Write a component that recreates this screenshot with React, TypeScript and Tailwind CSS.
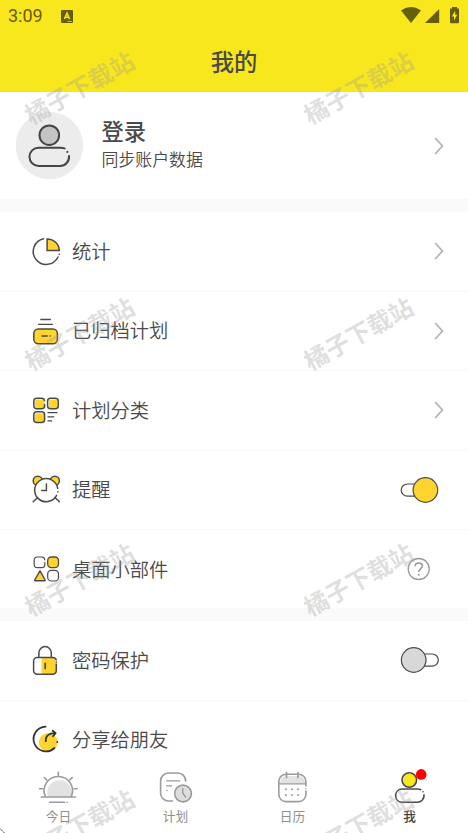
import * as React from "react";

const INK = "#4a4a4a";
const SUN = "#ffd42e";

type IconProps = { children: React.ReactNode };

// every row icon is drawn on a 32px board
const RowIcon: React.FC<IconProps> = ({ children }) => (
    <svg
        width={32}
        height={32}
        viewBox="0 0 32 32"
        fill="none"
        stroke={INK}
        strokeWidth={1.5}
        strokeLinecap="round"
        strokeLinejoin="round"
        className="shrink-0"
    >
        {children}
    </svg>
);

const StatsIcon: React.FC = () => (
    <RowIcon>
        <path d="M13.6 3.7A13 13 0 1 0 28 22" />
        <path d="M29.2 19.2v.2" />
        <path d="M17.1 15.6V3.9A12 12 0 0 1 29.3 15.6Z" fill={SUN} strokeLinejoin="miter" />
    </RowIcon>
);

const ArchiveIcon: React.FC = () => (
    <RowIcon>
        <path d="M10.8 4.5h9.6M8.6 9.3h13.8" strokeWidth={1.3} />
        <rect x={3.8} y={13.9} width={23.6} height={14.9} rx={4.5} fill={SUN} />
        <path d="M12 21h5.2M20 21h.2" />
    </RowIcon>
);

const CategoryIcon: React.FC = () => (
    <RowIcon>
        <rect x={5} y={5.5} width={9.5} height={8.8} rx={2} fill={SUN} stroke="none" />
        <rect x={19} y={5.5} width={8.8} height={8.8} rx={2} fill={SUN} stroke="none" />
        <rect x={5} y={19.2} width={9.5} height={8.8} rx={2} fill={SUN} stroke="none" />
        <path d="M14.6 6.6A3 3 0 0 0 11.6 4.2H6.8A3 3 0 0 0 3.8 7.2V11.8A3 3 0 0 0 6.8 14.8H11.6A3 3 0 0 0 14.6 11.8V10.5" />
        <rect x={17.6} y={4.2} width={10.7} height={10.6} rx={3} />
        <rect x={3.8} y={17.8} width={10.8} height={10.6} rx={3} />
        <path d="M18 18.7h9M18 22.8h5.8M18 26.9h3.6" strokeWidth={1.3} />
    </RowIcon>
);

const AlarmIcon: React.FC = () => (
    <RowIcon>
        <circle cx={7.8} cy={6.8} r={4.6} fill={SUN} />
        <circle cx={24.8} cy={6.8} r={4.6} fill={SUN} />
        <circle cx={16.3} cy={16} r={11.6} fill="#fff" stroke="none" />
        <path d="M27.7 14.3A11.6 11.6 0 1 0 26.6 21.4" />
        <path d="M27.8 17.7v.2" />
        <path d="M7.4 23.8l-4.2 4M25.2 23.8l4.2 4" />
        <path d="M16.4 10v6.6h-4.7" strokeLinejoin="miter" />
    </RowIcon>
);

const WidgetIcon: React.FC = () => (
    <RowIcon>
        <path d="M14.8 6.8A3.2 3.2 0 0 0 12 4H7.4A3.2 3.2 0 0 0 4.2 7.2V11.4A3.2 3.2 0 0 0 7.4 14.6H11.6A3.2 3.2 0 0 0 14.8 11.4V9.6" strokeWidth={1.2} />
        <rect x={17.7} y={4} width={10.8} height={10.7} rx={3.6} fill={SUN} strokeWidth={1.3} />
        <path d="M10 17.8L15.1 27Q15.2 27.7 14.6 27.7H5.2Q4.4 27.7 4.7 27Z" fill={SUN} strokeWidth={1.4} />
        <rect x={17.7} y={17.4} width={10.8} height={10.6} rx={3.6} strokeWidth={1.2} />
    </RowIcon>
);

const LockIcon: React.FC = () => (
    <RowIcon>
        <path d="M11.6 14H23.4A3 3 0 0 1 26 17V27A3 3 0 0 1 23.4 30H14Q11.6 30 11.4 27Z" fill={SUN} stroke="none" />
        <path d="M8.9 13.2V8.8A6.2 6.2 0 0 1 21.3 8.8V13.2" />
        <path d="M26.3 15.8A3.6 3.6 0 0 0 22.9 13.4H7.2A3.6 3.6 0 0 0 3.6 17V26.7A3.6 3.6 0 0 0 7.2 30.3H22.7A3.6 3.6 0 0 0 26.3 26.7V20" />
        <path d="M26.5 18v.1" />
        <path d="M15.2 19.4v5" strokeWidth={1.7} />
    </RowIcon>
);

const ShareIcon: React.FC = () => (
    <RowIcon>
        <circle cx={18.2} cy={18.4} r={9.3} fill={SUN} stroke="none" />
        <g stroke="#333" strokeWidth={1.8}>
            <path d="M15.6 2.6A12.4 12.4 0 1 0 24.5 24" />
            <path d="M27.3 17.8v.3" />
            <path d="M15.7 17.2C15.5 11.8 18.8 9 25.2 9.2" />
            <path d="M22.7 6.7l2.9 2.5-2.5 3" />
        </g>
    </RowIcon>
);

const Chevron: React.FC = () => (
    <svg width={10} height={18} viewBox="0 0 10 18" fill="none" stroke="#b4b4b4" strokeWidth={1.8} className="mr-[24.5px]">
        <path d="M1.2 1l7.2 8-7.2 8" />
    </svg>
);

const Toggle: React.FC<{ on?: boolean }> = ({ on }) => (
    <svg width={40} height={28} viewBox="0 0 40 28" fill="none" stroke={INK} strokeWidth={1.2} className="mr-[28px]">
        <rect x={on ? 1.2 : 14} y={8} width={24.3} height={12.2} rx={6.1} />
        <circle cx={on ? 25.4 : 13.7} cy={14} r={12.3} fill={on ? SUN : "#d8d8d8"} />
    </svg>
);

const Help: React.FC = () => (
    <svg width={24} height={24} viewBox="0 0 24 24" fill="none" stroke="#9b9b9b" strokeWidth={1.3} className="mr-[37px]">
        <circle cx={11.7} cy={12} r={10.5} />
        <path d="M8.1 9.3C8.1 4.9 15.4 4.9 15.4 9.1C15.4 11.6 11.7 11.8 11.7 15" strokeWidth={1.6} />
        <path d="M11.7 16.8v1.8" strokeWidth={1.8} />
    </svg>
);

type RowProps = {
    icon: React.ReactNode;
    label: string;
    children?: React.ReactNode;
    last?: boolean;
};

const Row: React.FC<RowProps> = ({ icon, label, children, last }) => (
    <div
        className={
            last
                ? "flex h-[78px] shrink-0 items-center pl-[30px]"
                : "flex h-[79.5px] shrink-0 items-center border-b border-[#f8f8f8] pl-[30px]"
        }
    >
        {icon}
        <span className="mb-[0.6px] ml-[10px] flex-1 text-[19.3px] font-[350] leading-7">{label}</span>
        {children}
    </div>
);

type TabProps = {
    label: string;
    active?: boolean;
    children: React.ReactNode;
};

const Tab: React.FC<TabProps> = ({ label, active, children }) => (
    <div className="flex flex-1 flex-col items-center pt-[7px]">
        <svg
            width={41}
            height={38}
            viewBox="0 0 41 38"
            fill="none"
            stroke={active ? INK : "#9b9b9b"}
            strokeWidth={1.6}
            strokeLinecap="round"
        >
            {children}
        </svg>
        <span
            className={
                active
                    ? "text-[12.7px] font-medium leading-[19px] text-[#444444]"
                    : "text-[12.7px] leading-[19px] text-[#8f8f8f]"
            }
        >
            {label}
        </span>
    </div>
);

const StatusBar: React.FC = () => (
    <div className="flex h-8 items-center pl-2 text-[#655e0c]">
        <span className="font-[Roboto] text-[18px] leading-8">3:09</span>
        <svg width={12} height={13} viewBox="0 0 12 13" className="ml-[18px]">
            <rect width={12} height={13} rx={1} fill="currentColor" />
            <path d="M3.4 9L6 3.2 8.6 9M4.4 7.3h3.2" fill="none" stroke="#f9e71e" strokeWidth={1.5} />
            <path d="M6.5 11.4h4.5" stroke="#f9e71e" strokeWidth={0.7} />
        </svg>
        <div className="flex-1" />
        <svg width={60} height={18} viewBox="0 0 60 18" fill="currentColor" className="mr-[8px]">
            <path d="M1 3.4Q11 -3.2 21 3.4L11 16Z" />
            <path d="M25 16L39.2 2V16Z" />
            <path d="M50 1.5h2V0h5v1.5h2V15.2a1 1 0 0 1-1 1h-7a1 1 0 0 1-1-1Z" />
            <path d="M55.2 3.8L51.8 9.4H54V13.5L57.2 7.7H55.2Z" fill="#f9e71e" />
        </svg>
    </div>
);

const Watermark: React.FC<{ className: string }> = ({ className }) => (
    <span
        className={`absolute w-[130px] -rotate-29 text-center text-[24.1px] font-bold leading-8 whitespace-nowrap text-[#999999]/32 ${className}`}
    >
        橘子下载站
    </span>
);

const App: React.FC = () => {

    return (
        <div className="relative flex h-[833px] w-[468px] flex-col overflow-hidden bg-white font-['Noto_Sans_CJK_SC',sans-serif] text-[#4a4a4a]">
            <header className="h-[92px] shrink-0 bg-[#f9e71e]">
                <StatusBar />
                <h1 className="text-center text-[23.3px] font-medium leading-[58px]">我的</h1>
            </header>
            <main className="flex min-h-0 flex-1 flex-col overflow-hidden">
                <section className="flex h-[107px] shrink-0 items-center pl-[15px]">
                    <svg width={69} height={69} viewBox="0 0 69 69" fill="none" stroke="#444549" strokeWidth={2} strokeLinecap="round">
                        <circle cx={34.4} cy={34.5} r={33.7} fill="#ececec" stroke="none" />
                        <circle cx={34.3} cy={24.2} r={9.8} fill="#c4c4c4" />
                        <path d="M49.6 37.4Q47.6 36.7 45.4 36.7H23.6A9.1 9.1 0 0 0 23.6 55H45A9 9 0 0 0 54 45" fill="#ececec" />
                        <path d="M52.3 40.8v.2" />
                    </svg>
                    <div className="mb-[4px] ml-[17.5px] flex-1">
                        <div className="text-[22.3px] font-medium leading-[29px]">登录</div>
                        <div className="text-[16.9px] font-[350] leading-[27px]">同步账户数据</div>
                    </div>
                    <Chevron />
                </section>
                <div className="h-[13px] shrink-0 bg-[#fafafa]" />
                <Row icon={<StatsIcon />} label="统计">
                    <Chevron />
                </Row>
                <Row icon={<ArchiveIcon />} label="已归档计划">
                    <Chevron />
                </Row>
                <Row icon={<CategoryIcon />} label="计划分类">
                    <Chevron />
                </Row>
                <Row icon={<AlarmIcon />} label="提醒">
                    <Toggle on />
                </Row>
                <Row icon={<WidgetIcon />} label="桌面小部件" last>
                    <Help />
                </Row>
                <div className="h-[13px] shrink-0 bg-[#fafafa]" />
                <Row icon={<LockIcon />} label="密码保护">
                    <Toggle />
                </Row>
                <Row icon={<ShareIcon />} label="分享给朋友" last />
            </main>
            <nav className="flex h-[72px] shrink-0 bg-white">
                <Tab label="今日">
                    <path d="M10 29A12.3 12.3 0 1 1 33 29Z" fill="#e2e2e2" stroke="none" />
                    <path d="M7.6 29A14.2 14.2 0 1 1 33 29M3.2 29H37.4" />
                    <path d="M11.5 34.2h15M29 34.2h.2" />
                    <path d="M20.3 4.4v3M1.5 20.8h3.2M36 20.8h3M6.4 9.6l2.4 2.4M34.2 9.6l-2.4 2.4" />
                </Tab>
                <Tab label="计划">
                    <g transform="translate(0.7 0)">
                        <path d="M16.8 33H12.4A8 8 0 0 1 4.9 25V13A8 8 0 0 1 12.9 5H22A8 8 0 0 1 30 13.2" />
                        <path d="M11 12.9h13M11 17.9h5M11.2 22.5h.2" strokeWidth={1.4} />
                        <circle cx={27.3} cy={25.5} r={8.4} fill="#dedede" />
                        <path d="M27 20.4V25.2L30 29.2" strokeWidth={1.4} />
                    </g>
                </Tab>
                <Tab label="日历">
                    <g transform="translate(1.1 0)">
                        <path d="M6.9 15.5V14A7 7 0 0 1 13.4 8H25.4A7 7 0 0 1 31.9 14V15.5Z" fill="#e2e2e2" stroke="none" />
                        <path d="M32.8 18V13.5A7.3 7.3 0 0 0 25.4 6.2H13A7.3 7.3 0 0 0 5.7 13.5V26.3A7.3 7.3 0 0 0 13 33.6H25.4A7.3 7.3 0 0 0 32.8 26.3V23" />
                        <path d="M32.8 20.5v.1M5.7 15.9H32.4" strokeWidth={1.4} />
                        <path d="M13.4 4.4v5.2M24.8 4.4v5.2" />
                        <path d="M12.7 21.3h.1M18.8 21.3h.1M24.9 21.3h.1M12.7 27h.1M18.8 27h.1M24.9 27h.1" strokeWidth={1.9} />
                    </g>
                </Tab>
                <Tab label="我" active>
                    <circle cx={20.8} cy={12.4} r={7} fill="#f9e71e" stroke="none" />
                    <circle cx={20.3} cy={12} r={7.3} />
                    <path d="M31.8 21.7Q30.3 21 28.8 21H12.5A6.7 6.7 0 0 0 12.5 34.3H28.3A6.7 6.7 0 0 0 35 26.8" />
                    <path d="M34 23.7v.1" />
                    <circle cx={32.2} cy={6.4} r={5.3} fill="#ff0000" stroke="none" />
                </Tab>
            </nav>
            <div className="pointer-events-none absolute inset-0">
                <Watermark className="top-[70.5px] left-[13.5px]" />
                <Watermark className="top-[70.5px] left-[293px]" />
                <Watermark className="top-[316.5px] left-[13.5px]" />
                <Watermark className="top-[316.5px] left-[293px]" />
                <Watermark className="top-[562.5px] left-[13.5px]" />
                <Watermark className="top-[562.5px] left-[293px]" />
                <Watermark className="top-[808.5px] left-[13.5px]" />
                <Watermark className="top-[808.5px] left-[293px]" />
                {/* rounded corner of the device frame */}
                <svg width={5} height={5} viewBox="0 0 5 5" className="absolute bottom-0 left-0">
                    <path d="M0 0.5L4.5 5" stroke="#222" strokeWidth={1} strokeDasharray="1.5 0.8" />
                </svg>
            </div>
        </div>
    );
};

export default App;
